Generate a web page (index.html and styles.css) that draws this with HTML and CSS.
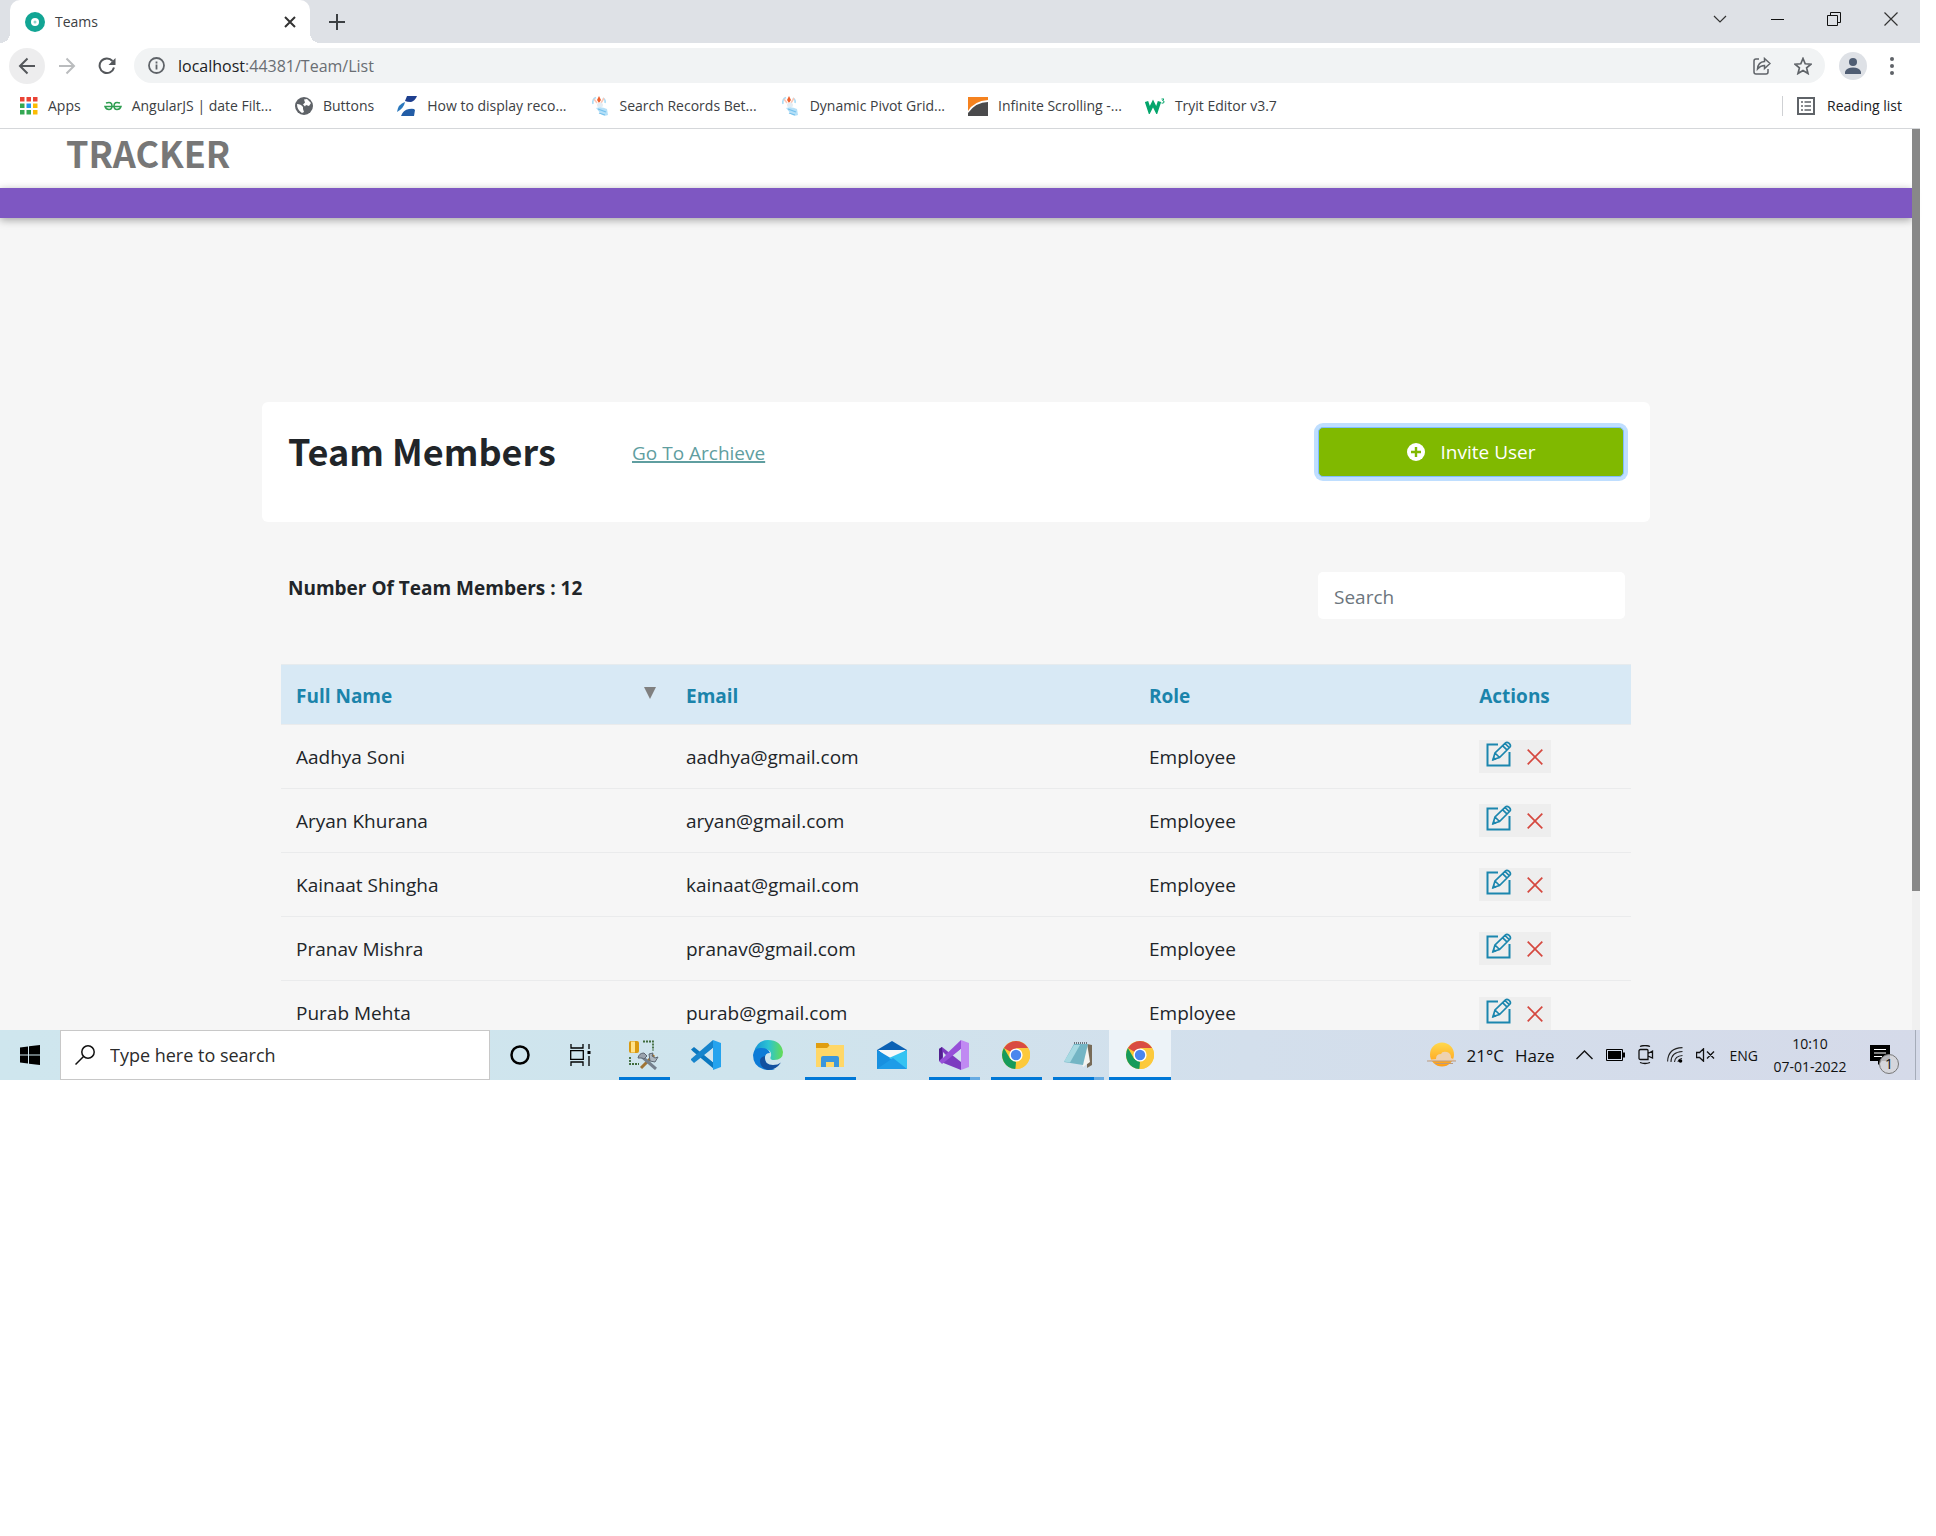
FILE: index.html
```html
<!DOCTYPE html>
<html lang="en">
<head>
<meta charset="utf-8">
<title>Teams</title>
<link rel="stylesheet" href="styles.css">
</head>
<body>
<svg class="defs" width="0" height="0" aria-hidden="true">
  <symbol id="edit" viewBox="0 0 26 26">
    <path d="M12 3.500H1.500v21h22V11" fill="none" stroke="#1b86ae" stroke-width="2"/>
    <path d="M7 18.500l2-6.500L19.500 1.800q1.500-1.300 3.700.6 2 2 .8 3.600L13.500 16.500zM9 12l4.500 4.500M16.500 4.700l4.700 4.500M19 2.500l4.500 4.300" fill="none" stroke="#1b86ae" stroke-width="1.700"/>
    <path d="M6 20l1.500-4.500 3 3z" fill="#1b86ae"/>
  </symbol>
  <symbol id="cross" viewBox="0 0 16 16"><path d="M.7.7l14.600 14.600M15.300.7L.7 15.300" fill="none" stroke="#d5483f" stroke-width="1.700"/></symbol>
  <symbol id="ant" viewBox="0 0 18 20">
    <path d="M5 1.500Q1 3 2 8M12 2q3 2 2 5" fill="none" stroke="#a9dcf6" stroke-width="1.500"/>
    <path d="M8 0l2 4-2 3-2-3z" fill="#f0602c"/><path d="M3 3l3 4M13 2l-3 5" stroke="#f9c8b8" stroke-width="1.500"/>
    <ellipse cx="9" cy="9" rx="3" ry="2.500" fill="#e2edf4"/><path d="M5 12q5-2 11 1l1 6q-4 2-7-1z" fill="#b5e0f8"/>
    <path d="M7 13l8 3M8 17l6 2" stroke="#74c0ec" stroke-width="1.200"/>
  </symbol>
  <symbol id="chrome" viewBox="0 0 28 28">
    <circle cx="14" cy="14" r="14" fill="#fcc934"/>
    <path d="M14 14L1.900 7A14 14 0 0 1 26.100 7z" fill="#d94b42"/>
    <path d="M1.900 7L8 17.500 14 21l-.6 7A14 14 0 0 1 1.900 7z" fill="#169b5b"/>
    <path d="M14 7h12.100A14 14 0 0 1 13.400 28L20 17.500z" fill="#fcc93c"/>
    <circle cx="14" cy="14" r="6.600" fill="#fff"/><circle cx="14" cy="14" r="5.200" fill="#4a86ee"/>
  </symbol>
</svg>

<div class="screen">
  <div class="tabstrip">
    <div class="tab">
      <svg width="20" height="20" viewBox="0 0 20 20"><circle cx="10" cy="10" r="10" fill="#12a594"/><circle cx="10" cy="10" r="4" fill="#fff"/><circle cx="10" cy="10" r="1.500" fill="#8bd3ca"/></svg>
      <span class="tab-title">Teams</span>
      <button class="plain" aria-label="Close tab"><svg width="12" height="12" viewBox="0 0 12 12"><path d="M1 1l10 10M11 1L1 11" stroke="#333" stroke-width="2"/></svg></button>
    </div>
    <button class="plain new-tab" aria-label="New tab"><svg width="16" height="16" viewBox="0 0 16 16"><path d="M8 0v16M0 8h16" stroke="#3c4043" stroke-width="2"/></svg></button>
    <div class="window-controls">
      <button class="plain" aria-label="Search tabs"><svg width="14" height="14" viewBox="0 0 14 14"><path d="M1 4l6 6 6-6" fill="none" stroke="#333" stroke-width="1.200"/></svg></button>
      <button class="plain" aria-label="Minimize"><svg width="14" height="14" viewBox="0 0 14 14"><path d="M1 7.500h13" stroke="#111"/></svg></button>
      <button class="plain" aria-label="Restore"><svg width="14" height="14" viewBox="0 0 14 14"><path d="M.5 3.500h10v10H.5zM3.500 3V.5h10v10H11" fill="none" stroke="#111"/></svg></button>
      <button class="plain" aria-label="Close"><svg width="14" height="14" viewBox="0 0 14 14"><path d="M.5.5l13 13M13.500.5l-13 13" stroke="#333" stroke-width="1.200"/></svg></button>
    </div>
  </div>

  <div class="toolbar">
    <button class="plain nav back" aria-label="Back"><svg width="18" height="18" viewBox="0 0 18 18"><path d="M17 9H2M9.500 1.500L2 9l7.500 7.500" fill="none" stroke="#54575b" stroke-width="2"/></svg></button>
    <button class="plain nav" aria-label="Forward"><svg width="18" height="18" viewBox="0 0 18 18"><path d="M1 9h15M8.500 1.500L16 9l-7.500 7.500" fill="none" stroke="#babcbe" stroke-width="2"/></svg></button>
    <button class="plain nav" aria-label="Reload"><svg width="18" height="18" viewBox="0 0 18 18"><path d="M16 10.500A7.300 7.300 0 1 1 14.500 4" fill="none" stroke="#54575b" stroke-width="2"/><path d="M17.500 1v7h-7z" fill="#54575b"/></svg></button>
    <div class="omnibox">
      <svg width="17" height="17" viewBox="0 0 17 17"><circle cx="8.500" cy="8.500" r="7.500" fill="none" stroke="#5f6368" stroke-width="1.800"/><path d="M8.500 7.500v5M8.500 4.500v2" stroke="#5f6368" stroke-width="1.800"/></svg>
      <span class="url">localhost<span class="path">:44381/Team/List</span></span>
      <svg width="18" height="18" viewBox="0 0 18 18"><path d="M6 2H3Q1 2 1 4v11q0 2 2 2h10q2 0 2-2v-3" fill="none" stroke="#5f6368" stroke-width="1.500"/><path d="M4.500 12q.5-7 7-7.500V1.500L17 6.500l-5.500 5V8.500q-4 0-7 3.500z" fill="none" stroke="#5f6368" stroke-width="1.500"/></svg>
      <svg width="18" height="18" viewBox="0 0 18 18"><path d="M9 1.500l2.200 5.300 5.800.4-4.400 3.700 1.400 5.600L9 13.500l-5 3 1.400-5.600L1 7.200l5.800-.4z" fill="none" stroke="#5f6368" stroke-width="1.700"/></svg>
    </div>
    <button class="plain avatar" aria-label="Profile"><svg width="16" height="16" viewBox="0 0 16 16"><circle cx="8" cy="4" r="4" fill="#4f5d73"/><path d="M0 16v-2.500Q2 9.500 8 9.500t8 4V16z" fill="#4f5d73"/></svg></button>
    <button class="plain menu" aria-label="Menu"><svg width="4" height="18" viewBox="0 0 4 18"><circle cx="2" cy="2" r="2" fill="#5f6368"/><circle cx="2" cy="9" r="2" fill="#5f6368"/><circle cx="2" cy="16" r="2" fill="#5f6368"/></svg></button>
  </div>

  <nav class="bookmarks">
    <a href="#"><svg width="18" height="18" viewBox="0 0 18 18"><path d="M0 0h4.500v4.500H0zM6.500 0H11v4.500H6.500zM13 0h4.500v4.500H13z" fill="#ea4335"/><path d="M0 6.500h4.500V11H0zM0 13h4.500v4.500H0zM6.500 13H11v4.500H6.500z" fill="#34a853"/><path d="M6.500 6.500H11V11H6.500z" fill="#2196f3"/><path d="M13 6.500h4.500V11H13zM13 13h4.500v4.500H13z" fill="#fbbc04"/></svg><span>Apps</span></a>
    <a href="#"><svg width="18" height="18" viewBox="0 0 18 18"><path d="M2 6q6-2 6 3 0 3.500-3 3.500T1 9.500h16q-1 3-4 3T10 9q0-5 6-3" fill="none" stroke="#2f9e51" stroke-width="1.500"/></svg><span>AngularJS | date Filt...</span></a>
    <a href="#"><svg width="18" height="18" viewBox="0 0 18 18"><circle cx="9" cy="9" r="9" fill="#5f6368"/><path d="M2 7q4 0 6 3-.5 2 1 5l-2 1q-5-3-5-9zM9 2.500l3-.5 4 4-2 3-3-1-1 1.500-2-2 2-2z" fill="#fff"/></svg><span>Buttons</span></a>
    <a href="#"><svg width="20" height="20" viewBox="0 0 20 20"><path d="M10 0h10q-2 5-6 6-4 0-6-1z" fill="#1e3f8f"/><path d="M0 16Q1 8 8 6q-1 6-8 10z" fill="#2b78bd"/><path d="M4 20q2-6 8-7 5-1 6 1l-1 6z" fill="#235da6"/></svg><span>How to display reco...</span></a>
    <a href="#"><svg width="20" height="20"><use href="#ant"/></svg><span>Search Records Bet...</span></a>
    <a href="#"><svg width="20" height="20"><use href="#ant"/></svg><span>Dynamic Pivot Grid...</span></a>
    <a href="#"><svg width="20" height="20" viewBox="0 0 20 20"><path d="M0 1h20v3Q6 5 0 15z" fill="#f5821f"/><path d="M0 20v-3Q8 6 20 6v14z" fill="#4a4a4c"/></svg><span>Infinite Scrolling -...</span></a>
    <a href="#"><svg width="20" height="16" viewBox="0 0 20 16"><path d="M1.500 3.500l3 9 3.500-7 3.500 7 3-9" fill="none" stroke="#04a56b" stroke-width="3.500"/><path d="M16.500 1h2.500l-1.500 1.500q2 0 1.500 2-1 1-2.500.5" fill="none" stroke="#04a56b"/></svg><span>Tryit Editor v3.7</span></a>
    <a href="#" class="reading"><svg width="18" height="18" viewBox="0 0 18 18"><path d="M1 1h16v16H1z" fill="none" stroke="#5f6368" stroke-width="2"/><path d="M4 5h2M7.500 5H14M4 9h2M7.500 9H14M4 13h2M7.500 13H14" stroke="#5f6368" stroke-width="1.600"/></svg><span>Reading list</span></a>
  </nav>

  <div class="viewport">
    <div class="page">
      <header class="site-header">TRACKER</header>
      <div class="site-bar"></div>
      <main class="content">
        <section class="card">
          <h1>Team Members</h1>
          <a class="archive" href="#">Go To Archieve</a>
          <button class="invite"><svg width="18" height="18" viewBox="0 0 18 18"><circle cx="9" cy="9" r="9" fill="#fff"/><path d="M9 4v10M4 9h10" stroke="#80b900" stroke-width="2.400"/></svg>Invite User</button>
        </section>
        <div class="summary">
          <strong>Number Of Team Members : 12</strong>
          <input type="search" placeholder="Search" aria-label="Search">
        </div>
        <table class="members">
          <colgroup><col class="c-name"><col class="c-email"><col class="c-role"><col></colgroup>
          <thead><tr><th><div class="sort">Full Name<svg width="12" height="12" viewBox="0 0 12 12"><path d="M0 0h12L6 12z" fill="#808080"/></svg></div></th><th>Email</th><th>Role</th><th class="act">Actions</th></tr></thead>
          <tbody>
            <tr><td>Aadhya Soni</td><td>aadhya@gmail.com</td><td>Employee</td><td class="act"><div class="actions"><button class="plain" aria-label="Edit"><svg width="26" height="26"><use href="#edit"/></svg></button><button class="plain del" aria-label="Delete"><svg width="16" height="16"><use href="#cross"/></svg></button></div></td></tr>
            <tr><td>Aryan Khurana</td><td>aryan@gmail.com</td><td>Employee</td><td class="act"><div class="actions"><button class="plain" aria-label="Edit"><svg width="26" height="26"><use href="#edit"/></svg></button><button class="plain del" aria-label="Delete"><svg width="16" height="16"><use href="#cross"/></svg></button></div></td></tr>
            <tr><td>Kainaat Shingha</td><td>kainaat@gmail.com</td><td>Employee</td><td class="act"><div class="actions"><button class="plain" aria-label="Edit"><svg width="26" height="26"><use href="#edit"/></svg></button><button class="plain del" aria-label="Delete"><svg width="16" height="16"><use href="#cross"/></svg></button></div></td></tr>
            <tr><td>Pranav Mishra</td><td>pranav@gmail.com</td><td>Employee</td><td class="act"><div class="actions"><button class="plain" aria-label="Edit"><svg width="26" height="26"><use href="#edit"/></svg></button><button class="plain del" aria-label="Delete"><svg width="16" height="16"><use href="#cross"/></svg></button></div></td></tr>
            <tr class="last"><td>Purab Mehta</td><td>purab@gmail.com</td><td>Employee</td><td class="act"><div class="actions"><button class="plain" aria-label="Edit"><svg width="26" height="26"><use href="#edit"/></svg></button><button class="plain del" aria-label="Delete"><svg width="16" height="16"><use href="#cross"/></svg></button></div></td></tr>
          </tbody>
        </table>
      </main>
    </div>
    <div class="scrollbar"><div class="thumb"></div></div>
  </div>

  <footer class="taskbar">
    <button class="plain start" aria-label="Start"><svg width="20" height="20" viewBox="0 0 20 20"><path d="M0 2.500L8 1.500v8H0zM9 1.300L20 0v9.500H9zM0 10.500h8v8l-8-1zM9 10.500h11V20L9 18.700z"/></svg></button>
    <label class="tb-search"><svg width="20" height="20" viewBox="0 0 20 20"><circle cx="13" cy="7" r="6.200" fill="none" stroke="#111" stroke-width="1.500"/><path d="M8.500 11.500L.5 19.500" stroke="#111" stroke-width="1.500"/></svg><input type="text" placeholder="Type here to search"></label>
    <div class="system">
      <button class="plain sys" aria-label="Cortana"><svg width="20" height="20" viewBox="0 0 20 20"><circle cx="10" cy="10" r="8.500" fill="none" stroke="#000" stroke-width="2.500"/></svg></button>
      <button class="plain sys" aria-label="Task view"><svg width="21" height="22" viewBox="0 0 21 22"><path d="M1 0v4h12V0M1 22v-4h12v4M.7 6.700h12.600v8.600H.7zM19 0v5M19 12v10" fill="none" stroke="#000" stroke-width="1.300"/><path d="M17.500 7h3v3h-3z"/></svg></button>
    </div>
    <button class="plain app run" aria-label="SQL Server Management Studio"><svg width="30" height="30" viewBox="0 0 30 30"><path d="M14 1.500h10v9M1 17v7h9" fill="none" stroke="#3f6b3c" stroke-width="1.800" stroke-dasharray="2 1"/><rect x="0" y="1" width="10" height="12" rx="2" fill="#d99a11"/><path d="M2 1.500h4v11H2z" fill="#ffe28a"/><path d="M12 28L25 15" stroke="#a07435" stroke-width="3"/><path d="M11 15l16 14" stroke="#75808d" stroke-width="3"/><path d="M9 18q1-5 6-5l3 3-3 3-2-1z" fill="#9aa3ad" stroke="#5e6873"/><path d="M20 14l4-1-1 3 3 2 3-1-3 5-5-1z" fill="#aeb7c0" stroke="#5e6873"/></svg></button>
    <button class="plain app" aria-label="Visual Studio Code"><svg width="30" height="30" viewBox="0 0 30 30"><path d="M0 9.500l3-2.500 20 16v6L2 11.500z" fill="#0a77bf"/><path d="M0 20l3 3L22 8V0L0 19z" fill="#1684cc"/><path d="M22 0l8 3v24l-8 3z" fill="#25a3ee"/><path d="M22 8v14l-8-7z" fill="#d2e5ee"/></svg></button>
    <button class="plain app" aria-label="Edge"><svg width="30" height="30" viewBox="0 0 30 30"><defs><linearGradient id="eg"><stop offset="0" stop-color="#1593d8"/><stop offset=".5" stop-color="#2cc3d2"/><stop offset="1" stop-color="#65dd53"/></linearGradient></defs><path d="M1 12Q4 0 15 0q13 0 15 12 0 8-9 8-5 0-3-4 1-6-6-7Q5 8 1 14z" fill="url(#eg)"/><path d="M0 15q1-8 9-7 6 0 8 5-6 0-5 7 2 8 10 9-4 1.500-8 1Q0 28 0 15z" fill="#0d7bd7"/><path d="M12 16q-1 9 8 9 5 0 8-2.500Q23 30 15 30q-8-2-8-9 0-4 5-5z" fill="#12509f"/></svg></button>
    <button class="plain app run" aria-label="File Explorer"><svg width="28" height="24" viewBox="0 0 28 24"><path d="M0 0h12l2 3h14v21H0z" fill="#e09d10"/><path d="M0 5h11l3-3h14v22H0z" fill="#ffd767"/><path d="M5 24v-9q0-2 2-2h14q2 0 2 2v9h-5v-5h-8v5z" fill="#3b96dc"/></svg></button>
    <button class="plain app" aria-label="Mail"><svg width="30" height="28" viewBox="0 0 30 28"><path d="M0 9L15 0l15 9v4H0z" fill="#0b61b4"/><path d="M1 9h28L15 21z" fill="#f7f8f9"/><path d="M0 9l17 10 13 9H0z" fill="#1790e0"/><path d="M30 9v19L12 17z" fill="#35c3f2"/><path d="M0 28l16-11 14 11z" fill="#1e9ce8"/></svg></button>
    <button class="plain app run multi" aria-label="Visual Studio"><svg width="30" height="30" viewBox="0 0 30 30"><path d="M0 9l3-2 19 15v8L2 22z" fill="#7c3cc0"/><path d="M0 9l3-2 1 15-4-1z" fill="#52218f"/><path d="M0 21l3 3L22 9V0z" fill="#9650d8"/><path d="M22 0l8 3v24l-8 3z" fill="#c08af2"/><path d="M22 9v12l-7-6zM4 12v6l3-3z" fill="#d2e3ed"/></svg></button>
    <button class="plain app run" aria-label="Chrome"><svg width="28" height="28"><use href="#chrome"/></svg></button>
    <button class="plain app run multi" aria-label="Notepad"><svg width="28" height="28" viewBox="0 0 28 28"><path d="M23 3l5 1v20l-5 3z" fill="#786b58"/><path d="M23 2l3 19-7 5-1-3z" fill="#f4f4f0"/><path d="M10 3h14l-5 21-19-3z" fill="#73b5c4"/><path d="M10 4h6L6 21.500l-6-1z" fill="#a7d9e2"/><path d="M10 2h14" stroke="#6d747c" stroke-width="2" stroke-dasharray="1 1"/></svg></button>
    <button class="plain app run active" aria-label="Chrome window"><svg width="28" height="28"><use href="#chrome"/></svg></button>
    <div class="tray">
      <div class="weather"><svg width="29" height="26" viewBox="0 0 29 26"><defs><linearGradient id="sun" x2="0" y2="1"><stop offset="0" stop-color="#ffd84d"/><stop offset="1" stop-color="#ff9d17"/></linearGradient></defs><circle cx="15" cy="12.500" r="12" fill="url(#sun)"/><path d="M1 19q3-2 8-2 0-5 5-5 1-3 6-2 4 1 4 6 3 1 5 3z" fill="#eed2b2"/><path d="M0 19h29M8 21.500h18" stroke="#b99a80" stroke-width="1.200"/></svg><span>21°C</span><span>Haze</span></div>
      <svg width="17" height="10" viewBox="0 0 17 10"><path d="M.5 9l8-8 8 8" fill="none" stroke="#111" stroke-width="1.400"/></svg>
      <svg width="19" height="12" viewBox="0 0 19 12"><path d="M.5.5h16v11H.5z" fill="none" stroke="#000"/><path d="M2 2h13v8H2zM17 3.500h2v5h-2z"/></svg>
      <svg width="16" height="20" viewBox="0 0 16 20"><path d="M1 6q0-1.500 1.500-1.500h6.500q1 0 1 1v9H2.500Q1 14.500 1 13zM10 8.500L14.500 6v7L10 11M2 1.500q5-2 10 0M2 17.500q5 2 10 0" fill="none" stroke="#111" stroke-width="1.300"/></svg>
      <svg width="16" height="16" viewBox="0 0 16 16"><path d="M.6 14.500Q1 1 15.500.6M4 15Q4 5 15.500 4.500M7.500 15Q8 9 15.500 8.500M11 15q.5-3 4-3.500" fill="none" stroke="#222" stroke-width="1.100"/><circle cx="13.500" cy="14" r="1.800"/></svg>
      <svg width="20" height="14" viewBox="0 0 20 14"><path d="M.6 4.500h3L7.500.8v12.400l-4-3.700h-3zM11 3.500l7 7M18 3.500l-7 7" fill="none" stroke="#111" stroke-width="1.300"/></svg>
      <span class="lang">ENG</span>
      <div class="clock"><span>10:10</span><span>07-01-2022</span></div>
      <div class="notice"><svg width="20" height="20" viewBox="0 0 20 20"><path d="M0 0h20v16h-8l-4 4v-4H0z"/><path d="M4 4.500h12M4 8h12M4 11.500h8" stroke="#fff" stroke-width="1.200"/></svg><span class="count">1</span></div>
    </div>
  </footer>
</div>
</body>
</html>
```
FILE: styles.css
```css
* { box-sizing: border-box; }
body { margin: 0; background: #fff; font-family: "Open Sans", "Noto Sans", sans-serif; color: #212529; }
svg { display: block; flex: none; }
.defs { position: absolute; }
.plain { border: 0; padding: 0; background: none; display: flex; align-items: center; justify-content: center; }
.screen { margin-right: 16px; }

.tabstrip { display: flex; height: 43px; padding-left: 10px; background: #dee1e6; }
.tab { position: relative; display: flex; align-items: center; width: 300px; padding: 0 14px 0 15px; background: #fff; border-radius: 10px 10px 0 0; font-size: 14px; color: #3c4043; }
.tab::before, .tab::after { content: ""; position: absolute; bottom: 0; width: 10px; height: 10px; }
.tab::before { left: -10px; background: radial-gradient(circle at 0 0, transparent 10px, #fff 10px); }
.tab::after { right: -10px; background: radial-gradient(circle at 100% 0, transparent 10px, #fff 10px); }
.tab-title { flex: 1; padding-left: 10px; }
.new-tab { width: 54px; }
.window-controls { display: flex; margin: 0 1px 0 auto; height: 37px; }
.window-controls .plain { width: 57px; }

.toolbar { display: flex; align-items: center; height: 45px; padding: 0 8px 0 9px; }
.nav { width: 36px; height: 36px; margin-right: 4px; border-radius: 50%; }
.back { background: #ededee; }
.omnibox { flex: 1; display: flex; align-items: center; gap: 23px; height: 35px; margin-left: 5px; padding: 0 13px 0 14px; border-radius: 18px; background: #f1f3f4; font-size: 16px; }
.url { flex: 1; margin-left: -10px; color: #202124; }
.path { color: #6a6e73; }
.avatar { width: 28px; height: 28px; margin: 0 5px 0 14px; border-radius: 50%; background: #dee1e6; }
.menu { width: 40px; height: 28px; }

.bookmarks { display: flex; align-items: center; gap: 23px; height: 41px; padding: 0 18px 4px 20px; border-bottom: 1px solid #d5d7da; }
.bookmarks a { display: flex; align-items: center; gap: 10px; color: #3c4043; font-size: 14px; line-height: 20px; text-decoration: none; white-space: nowrap; }
.bookmarks .reading { gap: 12px; margin-left: auto; padding-left: 14px; border-left: 1px solid #cfd1d4; color: #202124; }

.viewport { display: flex; background: #f6f6f6; }
.page { flex: 1; min-width: 0; }
.scrollbar { width: 8px; background: #f0f0f0; }
.thumb { height: 762px; background: #888; }
.site-header { height: 59px; padding-left: 66px; background: #fff; color: #777; font: bold 36px/46px "Noto Sans CJK SC", sans-serif; }
.site-bar { height: 30px; background: #7e57c2; box-shadow: 0 2px 8px rgba(0, 0, 0, .35); }
.content { max-width: 1388px; margin: 0 auto; padding-top: 184px; }
.card { display: flex; align-items: flex-start; height: 120px; padding: 25px 26px; border-radius: 6px; background: #fff; }
.card h1 { flex: 0 0 344px; margin: 0; font: bold 36px/46px "Noto Sans CJK SC", sans-serif; }
.archive { font-size: 19px; line-height: 52px; color: #5f9ea0; text-decoration-thickness: 2px; }
.invite { display: flex; align-items: center; justify-content: center; gap: 16px; width: 306px; height: 50px; margin-left: auto; border: 1px solid #80bdff; border-radius: 5px; background: #80b900; box-shadow: 0 0 0 4px #bfdeff; color: #fff; font: 19px/28px "Open Sans", sans-serif; }
.summary { display: flex; align-items: flex-start; justify-content: space-between; padding: 50px 25px 0 26px; }
.summary strong { font-size: 19px; line-height: 32px; }
.summary input { width: 307px; height: 47px; padding: 2px 16px 0; border: 0; border-radius: 5px; background: #fff; font: 19px/28px "Open Sans", sans-serif; }
.summary input::placeholder { color: #6c757d; opacity: 1; }

.members { width: calc(100% - 38px); margin: 45px 19px 0; border-collapse: separate; border-spacing: 0; table-layout: fixed; font-size: 19px; line-height: 28px; }
.c-name { width: 390px; }
.c-email { width: 463px; }
.c-role { width: 264px; }
.members th, .members td { height: 64px; padding: 0 15px; border-bottom: 1px solid #eaebec; text-align: left; vertical-align: middle; }
.members th { height: 61px; padding-top: 3px; border-top: 1px solid #e6ebee; background: #d8e9f5; color: #1b84ab; }
.members .act { text-align: center; }
.sort { display: flex; align-items: center; justify-content: space-between; }
.sort svg { margin-bottom: 6px; }
.actions { display: inline-flex; align-items: flex-start; gap: 15px; height: 33px; padding: 1px 8px 0 7px; background: #eee; vertical-align: top; }
.del { margin-top: 8px; }
.members .last td { height: 49px; padding-top: 18px; border-bottom: 0; vertical-align: top; }
.members .last .act { padding-top: 16px; }

.taskbar { display: flex; align-items: stretch; height: 50px; background: linear-gradient(90deg, #cfe6ee 0, #cfe4ed 40%, #d3dfec 65%, #d5dae9 100%); }
.start { width: 60px; }
.tb-search { display: flex; align-items: center; gap: 15px; width: 430px; padding-left: 14px; border: 1px solid #c8c8c8; background: #fff; }
.tb-search input { flex: 1; border: 0; padding: 0; background: none; font: 18px/26px "Open Sans", sans-serif; }
.tb-search input::placeholder { color: #2b2b2b; opacity: 1; }
.system { display: flex; width: 123px; }
.sys { width: 60px; }
.app { position: relative; width: 62px; }
.run::after { content: ""; position: absolute; left: 6px; right: 5px; bottom: 0; height: 3px; background: #0078d7; }
.multi::after { background: linear-gradient(90deg, #0078d7 41px, #67abe2 41px); }
.active { background: #edf3f8; }
.active::after { left: 0; right: 0; }
.tray { display: flex; align-items: center; gap: 13px; margin-left: auto; padding-right: 4px; color: #111; }
.weather { display: flex; align-items: center; gap: 11px; padding-right: 8px; font-size: 17px; }
.lang { padding: 0 1px; font-size: 14px; }
.clock { display: flex; flex-direction: column; align-items: center; width: 76px; font-size: 14px; line-height: 23px; }
.notice { position: relative; margin: 0 12px 0 9px; }
.count { position: absolute; left: 9px; top: 9px; width: 20px; height: 20px; border: 1px solid #777; border-radius: 50%; background: rgba(213, 213, 217, .85); font-size: 14px; line-height: 18px; text-align: center; }
.tray::after { content: ""; width: 1px; height: 50px; background: #a5acb9; }
```
